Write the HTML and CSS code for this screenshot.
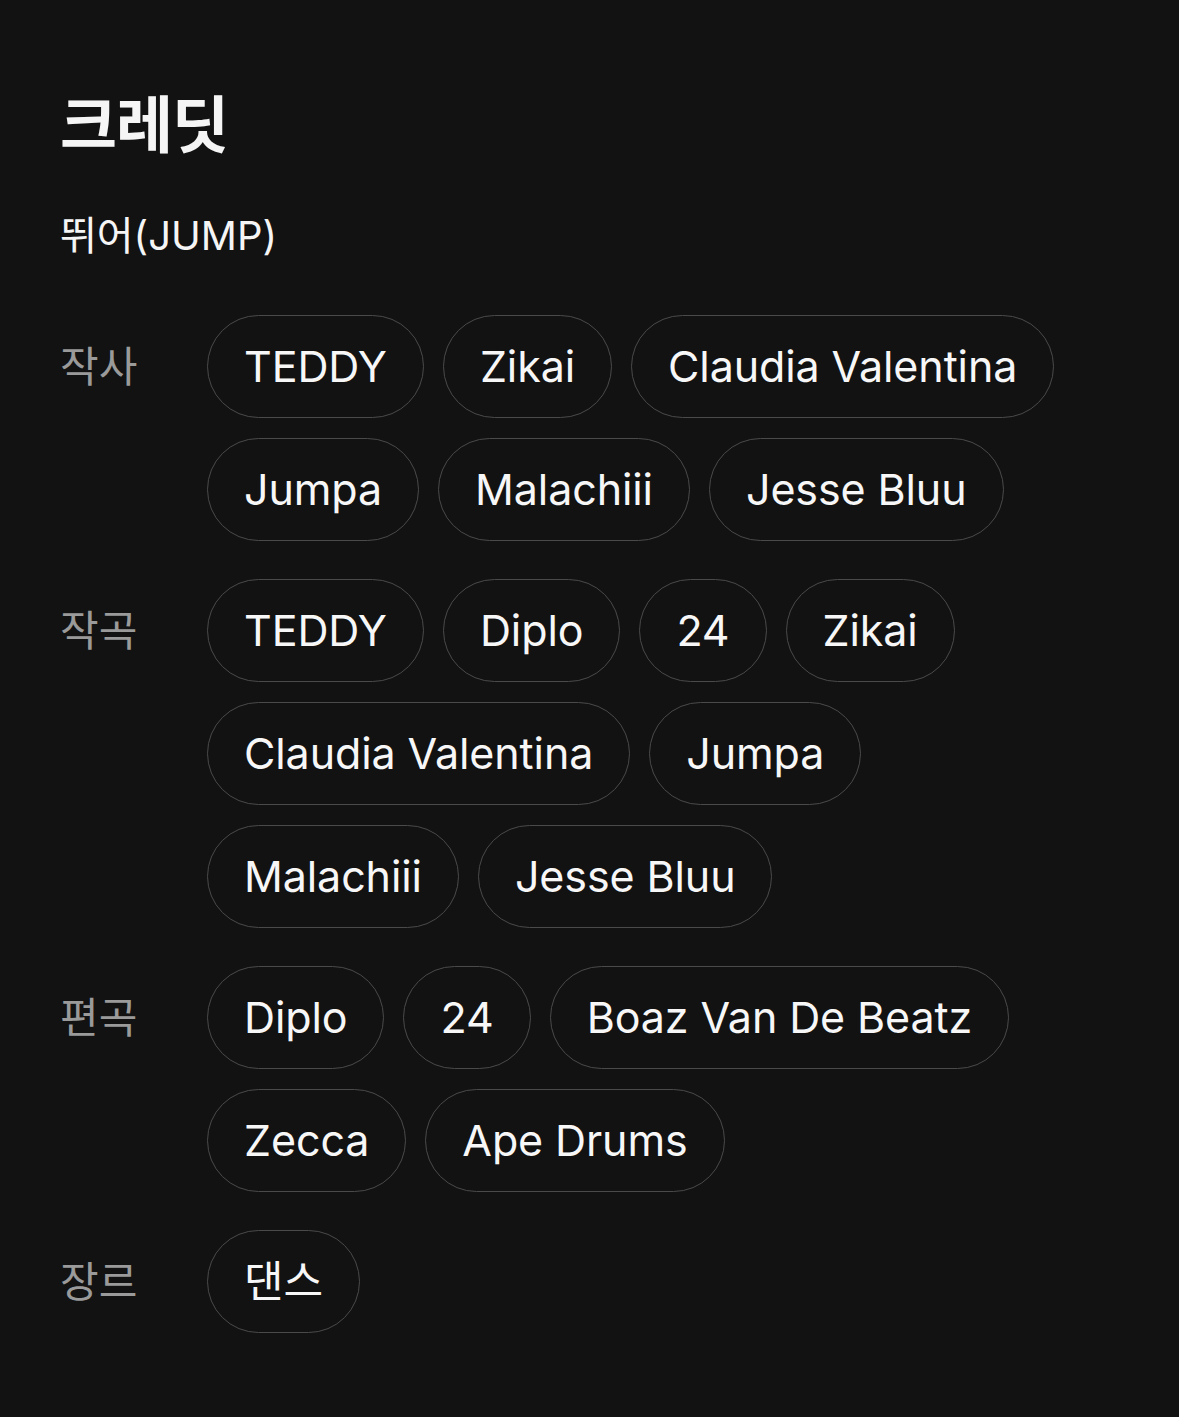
FILE: index.html
```html
<!DOCTYPE html>
<html lang="ko">
<head>
<meta charset="utf-8">
<link rel="stylesheet" href="styles.css">
</head>
<body>
<main class="credits">
  <h1 class="title">크레딧</h1>
  <p class="song">뛰어(JUMP)</p>
  <section class="group">
    <div class="label">작사</div>
    <div class="chips">
      <span class="chip">TEDDY</span><span class="chip">Zikai</span><span class="chip">Claudia Valentina</span>
      <span class="chip">Jumpa</span><span class="chip">Malachiii</span><span class="chip">Jesse Bluu</span>
    </div>
  </section>
  <section class="group">
    <div class="label">작곡</div>
    <div class="chips">
      <span class="chip">TEDDY</span><span class="chip">Diplo</span><span class="chip">24</span><span class="chip">Zikai</span>
      <span class="chip">Claudia Valentina</span><span class="chip">Jumpa</span>
      <span class="chip">Malachiii</span><span class="chip">Jesse Bluu</span>
    </div>
  </section>
  <section class="group">
    <div class="label">편곡</div>
    <div class="chips">
      <span class="chip">Diplo</span><span class="chip">24</span><span class="chip">Boaz Van De Beatz</span>
      <span class="chip">Zecca</span><span class="chip">Ape Drums</span>
    </div>
  </section>
  <section class="group">
    <div class="label">장르</div>
    <div class="chips">
      <span class="chip">댄스</span>
    </div>
  </section>
</main>
</body>
</html>
```
FILE: styles.css
```css
html, body {
  margin: 0;
  background: #121212;
}
body {
  font-family: Inter, "Noto Sans CJK KR", sans-serif;
  color: #f5f5f5;
}
.credits {
  padding: 86px 60px 60px 60px;
  max-width: 1000px;
}
.title {
  margin: 0;
  font-size: 62px;
  font-weight: 700;
  line-height: 80px;
  letter-spacing: -1px;
}
.song {
  margin: 46px 0 0 0;
  font-size: 40px;
  line-height: 48px;
  font-weight: 400;
}
.group {
  display: flex;
  margin-top: 38px;
}
.song + .group {
  margin-top: 55px;
}
.label {
  width: 147px;
  flex: none;
  font-size: 42px;
  line-height: 103px;
  color: #9a9a9a;
}
.chips {
  display: flex;
  flex-wrap: wrap;
  gap: 20px 19px;
  width: 860px;
}
.chip {
  box-sizing: border-box;
  height: 103px;
  padding: 0 36px;
  border: 1.5px solid #4a4a4a;
  border-radius: 52px;
  display: inline-flex;
  align-items: center;
  font-size: 43px;
  letter-spacing: -0.1px;
  line-height: 1;
  color: #f7f7f7;
}
```
